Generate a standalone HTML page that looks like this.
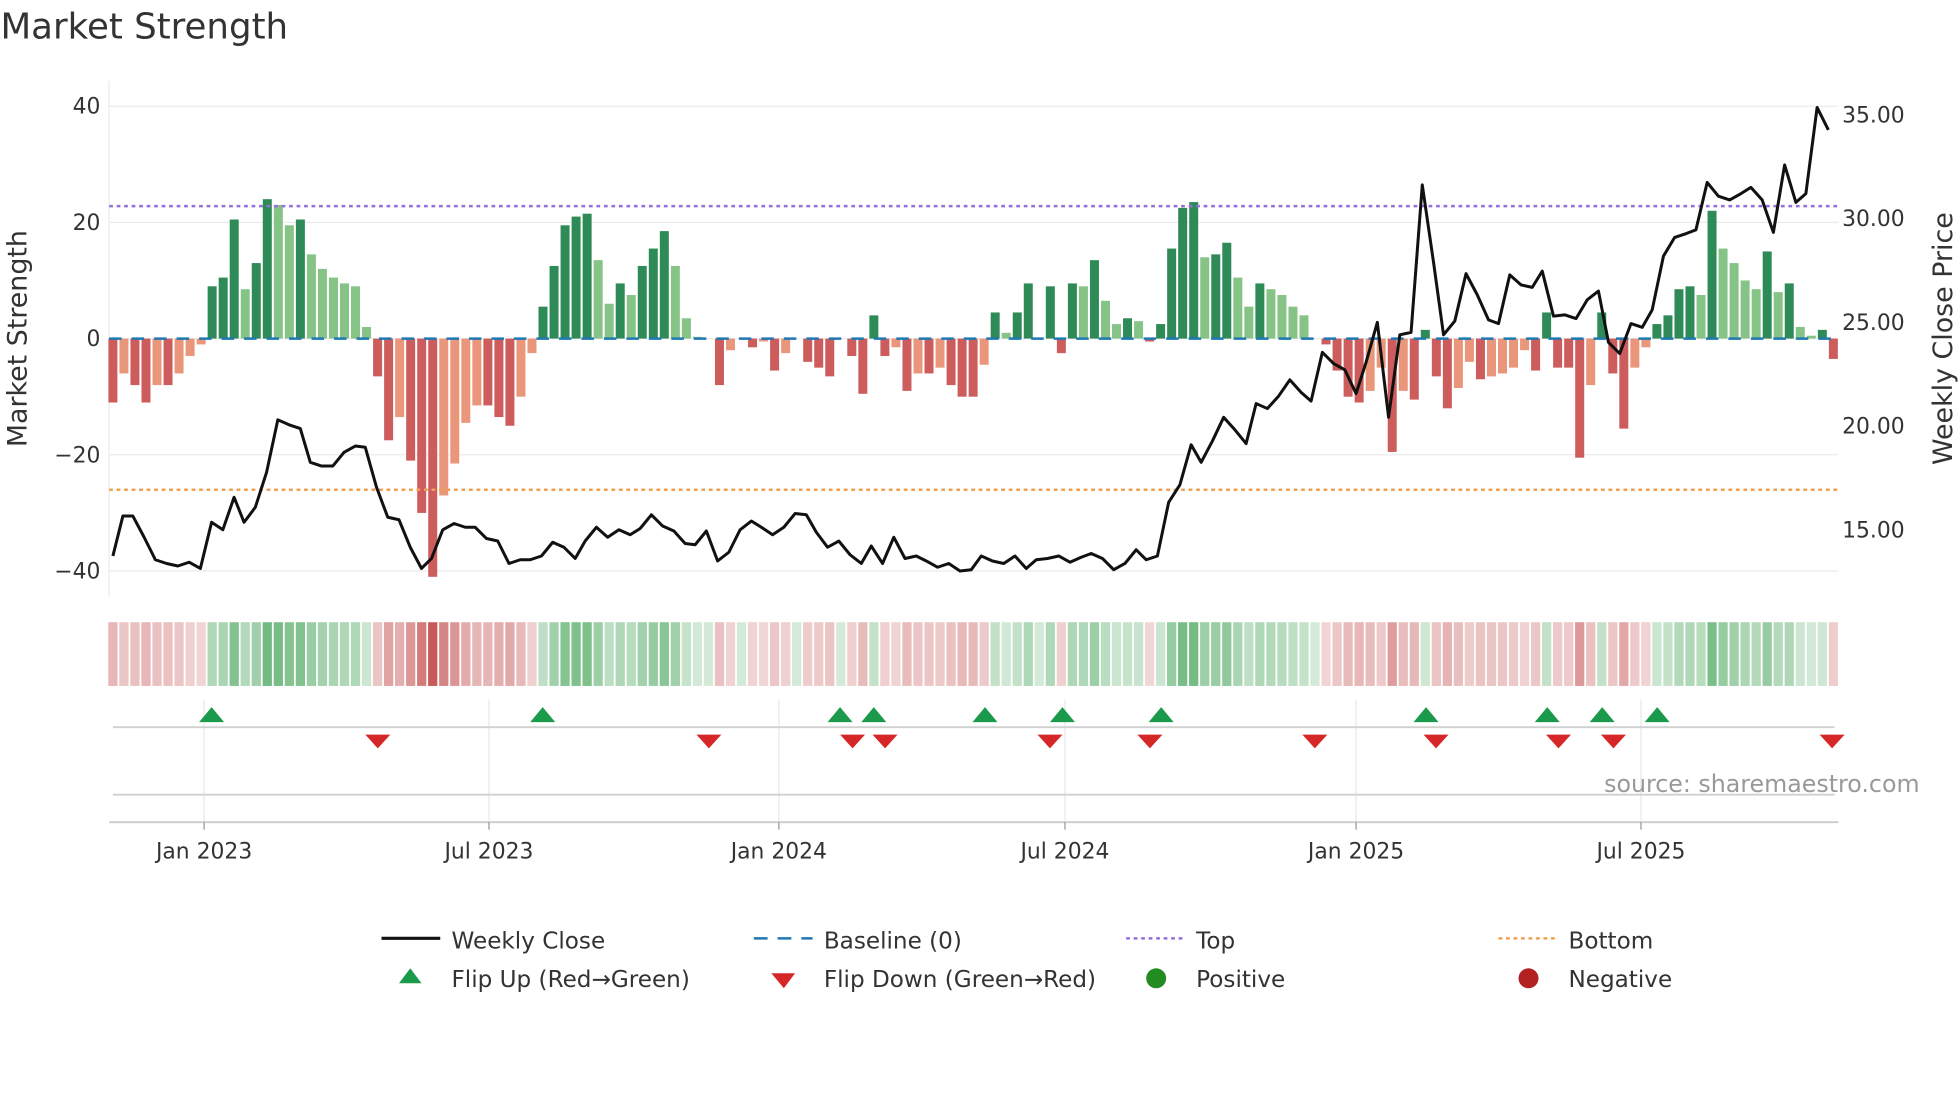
<!DOCTYPE html>
<html><head><meta charset="utf-8"><style>
html,body{margin:0;padding:0;background:#fff;}
svg{display:block;font-family:"DejaVu Sans","Liberation Sans",sans-serif;}
</style></head><body>
<svg id="s" width="1960" height="1102" viewBox="0 0 1568 882" xmlns="http://www.w3.org/2000/svg">
<rect width="1568" height="882" fill="#fff"/>
<text x="0" y="31" font-size="28.5" fill="#333">Market Strength</text>
<g stroke="#ebebeb" stroke-width="1">
<line x1="87" x2="1471" y1="85" y2="85"/><line x1="87" x2="1471" y1="178" y2="178"/>
<line x1="87" x2="1471" y1="271" y2="271"/><line x1="87" x2="1471" y1="364" y2="364"/>
<line x1="87" x2="1471" y1="457" y2="457"/>
<line x1="87" x2="87" y1="65" y2="478"/>
</g>
<g id="bars"></g>
<line x1="87" x2="1471" y1="271" y2="271" stroke="#1f77b4" stroke-width="2" stroke-dasharray="10,8"/>
<line x1="87" x2="1471" y1="165" y2="165" stroke="#9370db" stroke-width="2" stroke-dasharray="3,3"/>
<line x1="87" x2="1471" y1="392" y2="392" stroke="#f0a050" stroke-width="2" stroke-dasharray="3,3"/>
<polyline id="price" fill="none" stroke="#111" stroke-width="2.4" stroke-linejoin="round"/>
<g font-size="17.5" fill="#333" text-anchor="end">
<text x="80" y="91">40</text><text x="80" y="184">20</text><text x="80" y="277">0</text>
<text x="80" y="370">−20</text><text x="80" y="463">−40</text>
</g>
<g font-size="17.5" fill="#333">
<text x="1474" y="98">35.00</text><text x="1474" y="181">30.00</text><text x="1474" y="264">25.00</text>
<text x="1474" y="347">20.00</text><text x="1474" y="430">15.00</text>
</g>
<text transform="translate(21,271) rotate(-90)" font-size="21.5" fill="#333" text-anchor="middle">Market Strength</text>
<text transform="translate(1562,271) rotate(-90)" font-size="21.5" fill="#333" text-anchor="middle">Weekly Close Price</text>
<g id="heat"></g>
<g stroke="#e8e8e8" stroke-width="1">
<line x1="163" x2="163" y1="560" y2="658"/><line x1="391" x2="391" y1="560" y2="658"/>
<line x1="623" x2="623" y1="560" y2="658"/><line x1="852" x2="852" y1="560" y2="658"/>
<line x1="1085" x2="1085" y1="560" y2="658"/><line x1="1313" x2="1313" y1="560" y2="658"/>
</g>
<line x1="90" x2="1468" y1="582" y2="582" stroke="#d0d0d0" stroke-width="1.5"/>
<line x1="90" x2="1468" y1="636" y2="636" stroke="#d0d0d0" stroke-width="1.5"/>
<line x1="87" x2="1471" y1="658" y2="658" stroke="#ccc" stroke-width="1.5"/>
<g id="flips"></g>
<g stroke="#999" stroke-width="1">
<line x1="163" x2="163" y1="658" y2="664"/><line x1="391" x2="391" y1="658" y2="664"/>
<line x1="623" x2="623" y1="658" y2="664"/><line x1="852" x2="852" y1="658" y2="664"/>
<line x1="1085" x2="1085" y1="658" y2="664"/><line x1="1313" x2="1313" y1="658" y2="664"/>
</g>
<g font-size="17.5" fill="#333" text-anchor="middle">
<text x="163" y="687">Jan 2023</text><text x="391" y="687">Jul 2023</text><text x="623" y="687">Jan 2024</text>
<text x="852" y="687">Jul 2024</text><text x="1085" y="687">Jan 2025</text><text x="1313" y="687">Jul 2025</text>
</g>
<text x="1536" y="634" font-size="19" fill="#999" text-anchor="end">source: sharemaestro.com</text>
<g font-size="18.5" fill="#333">
<line x1="305" x2="352" y1="751" y2="751" stroke="#111" stroke-width="2.5"/>
<text x="361" y="759">Weekly Close</text>
<line x1="603" x2="650" y1="751" y2="751" stroke="#1f77b4" stroke-width="2" stroke-dasharray="11,8"/>
<text x="659" y="759">Baseline (0)</text>
<line x1="901" x2="948" y1="751" y2="751" stroke="#9370db" stroke-width="2" stroke-dasharray="3,3"/>
<text x="957" y="759">Top</text>
<line x1="1199" x2="1246" y1="751" y2="751" stroke="#f0a050" stroke-width="2" stroke-dasharray="3,3"/>
<text x="1255" y="759">Bottom</text>
<polygon points="328,775 319,787 337,787" fill="#1a9a4a"/>
<text x="361" y="790">Flip Up (Red→Green)</text>
<polygon points="617,779 636,779 627,791" fill="#d62728"/>
<text x="659" y="790">Flip Down (Green→Red)</text>
<circle cx="925" cy="783" r="8" fill="#228b22"/>
<text x="957" y="790">Positive</text>
<circle cx="1223" cy="783" r="8" fill="#b22222"/>
<text x="1255" y="790">Negative</text>
</g>
</svg>
<script>
var v=[-11,-6,-8,-11,-8,-8,-6,-3,-1,9,10.5,20.5,8.5,13,24,23,19.5,20.5,14.5,12,10.5,9.5,9,2,-6.5,-17.5,-13.5,-21,-30,-41,-27,-21.5,-14.5,-11.5,-11.5,-13.5,-15,-10,-2.5,5.5,12.5,19.5,21,21.5,13.5,6,9.5,7.5,12.5,15.5,18.5,12.5,3.5,0.3,0,-8,-2,0,-1.5,-0.5,-5.5,-2.5,0,-4,-5,-6.5,0,-3,-9.5,4,-3,-1.5,-9,-6,-6,-5,-8,-10,-10,-4.5,4.5,1,4.5,9.5,0,9,-2.5,9.5,9,13.5,6.5,2.5,3.5,3,-0.5,2.5,15.5,22.5,23.5,14,14.5,16.5,10.5,5.5,9.5,8.5,7.5,5.5,4,0,-1,-5.5,-10,-11,-9,-5,-19.5,-9,-10.5,1.5,-6.5,-12,-8.5,-4,-7,-6.5,-6,-5,-2,-5.5,4.5,-5,-5,-20.5,-8,4.5,-6,-15.5,-5,-1.5,2.5,4,8.5,9,7.5,22,15.5,13,10,8.5,15,8,9.5,2,0.5,1.5,-3.5];
var ns="http://www.w3.org/2000/svg";
function el(p,t,a){var e=document.createElementNS(ns,t);for(var k in a)e.setAttribute(k,a[k]);p.appendChild(e);return e;}
var bars=document.getElementById('bars'),heat=document.getElementById('heat');
var n=v.length,dx=(1467-90)/(n-1);
for(var i=0;i<n;i++){var x=90+dx*i,y=v[i],h=y*4.65,prev=i?v[i-1]:0,c;
 if(y>=0)c=(y>=prev)?'#2e8b57':'#86c386';else c=(y<=prev)?'#cd5c5c':'#e9967a';
 if(Math.abs(h)>0.3)el(bars,'rect',{x:x-3.6,y:h>0?271-h:271,width:7.2,height:Math.abs(h),fill:c});
 var a=Math.min(1,Math.abs(y)/41),col;
 if(y>=0)col='rgba(60,160,80,'+(0.22+0.5*Math.min(1,y/24))+')';else col='rgba(190,60,60,'+(0.2+0.65*a)+')';
 el(heat,'rect',{x:x-3.7,y:498,width:7.4,height:51,fill:col});}
var p=[[90,445],[98,413],[106,413],[115,430],[124,448],[133,451],[142,453],[151,450],[160,455],[169,418],[178,424],[187,398],[195,418],[204,406],[213,378],[222,336],[231,340],[240,343],[248,370],[257,373],[266,373],[275,362],[284,357],[292,358],[301,390],[310,414],[319,416],[328,438],[337,455],[345,447],[354,424],[363,419],[372,422],[380,422],[389,431],[398,433],[407,451],[416,448],[424,448],[433,445],[442,434],[451,438],[460,447],[468,433],[477,422],[486,430],[495,424],[504,428],[512,423],[521,412],[530,421],[539,425],[548,435],[556,436],[565,425],[574,449],[583,442],[592,424],[601,417],[609,422],[618,428],[627,422],[636,411],[645,412],[653,426],[662,438],[671,433],[680,444],[689,451],[697,437],[706,451],[715,430],[724,447],[733,445],[741,449],[750,454],[759,451],[768,457],[777,456],[785,445],[794,449],[803,451],[812,445],[821,455],[829,448],[838,447],[847,445],[856,450],[865,446],[873,443],[882,447],[891,456],[900,451],[909,440],[917,448],[926,445],[935,402],[944,388],[953,356],[961,370],[970,353],[979,334],[988,344],[997,355],[1005,323],[1014,327],[1023,317],[1032,304],[1041,314],[1049,321],[1058,282],[1067,291],[1076,296],[1085,315],[1093,290],[1102,258],[1111,334],[1120,268],[1129,266],[1138,148],[1147,210],[1155,268],[1164,257],[1173,219],[1182,236],[1191,256],[1199,259],[1208,220],[1217,228],[1226,230],[1234,217],[1243,253],[1252,252],[1261,255],[1270,240],[1279,233],[1287,274],[1296,283],[1305,259],[1314,262],[1322,248],[1331,205],[1340,190],[1349,187],[1357,184],[1366,146],[1375,157],[1384,160],[1393,155],[1401,150],[1410,160],[1419,186],[1428,132],[1437,162],[1445,155],[1454,86],[1463,104]];
document.getElementById('price').setAttribute('points',p.map(function(q){return q.join(',')}).join(' '));
var f=document.getElementById('flips');
[169,434,672,699,788,850,929,1141,1238,1282,1326].forEach(function(x){el(f,'polygon',{points:(x)+',566 '+(x-10)+',578 '+(x+10)+',578',fill:'#1a9a4a'});});
[302,567,682,708,840,920,1052,1149,1247,1291,1466].forEach(function(x){el(f,'polygon',{points:(x-10)+',588 '+(x+10)+',588 '+x+',599',fill:'#d62728'});});
</script>
</body></html>
